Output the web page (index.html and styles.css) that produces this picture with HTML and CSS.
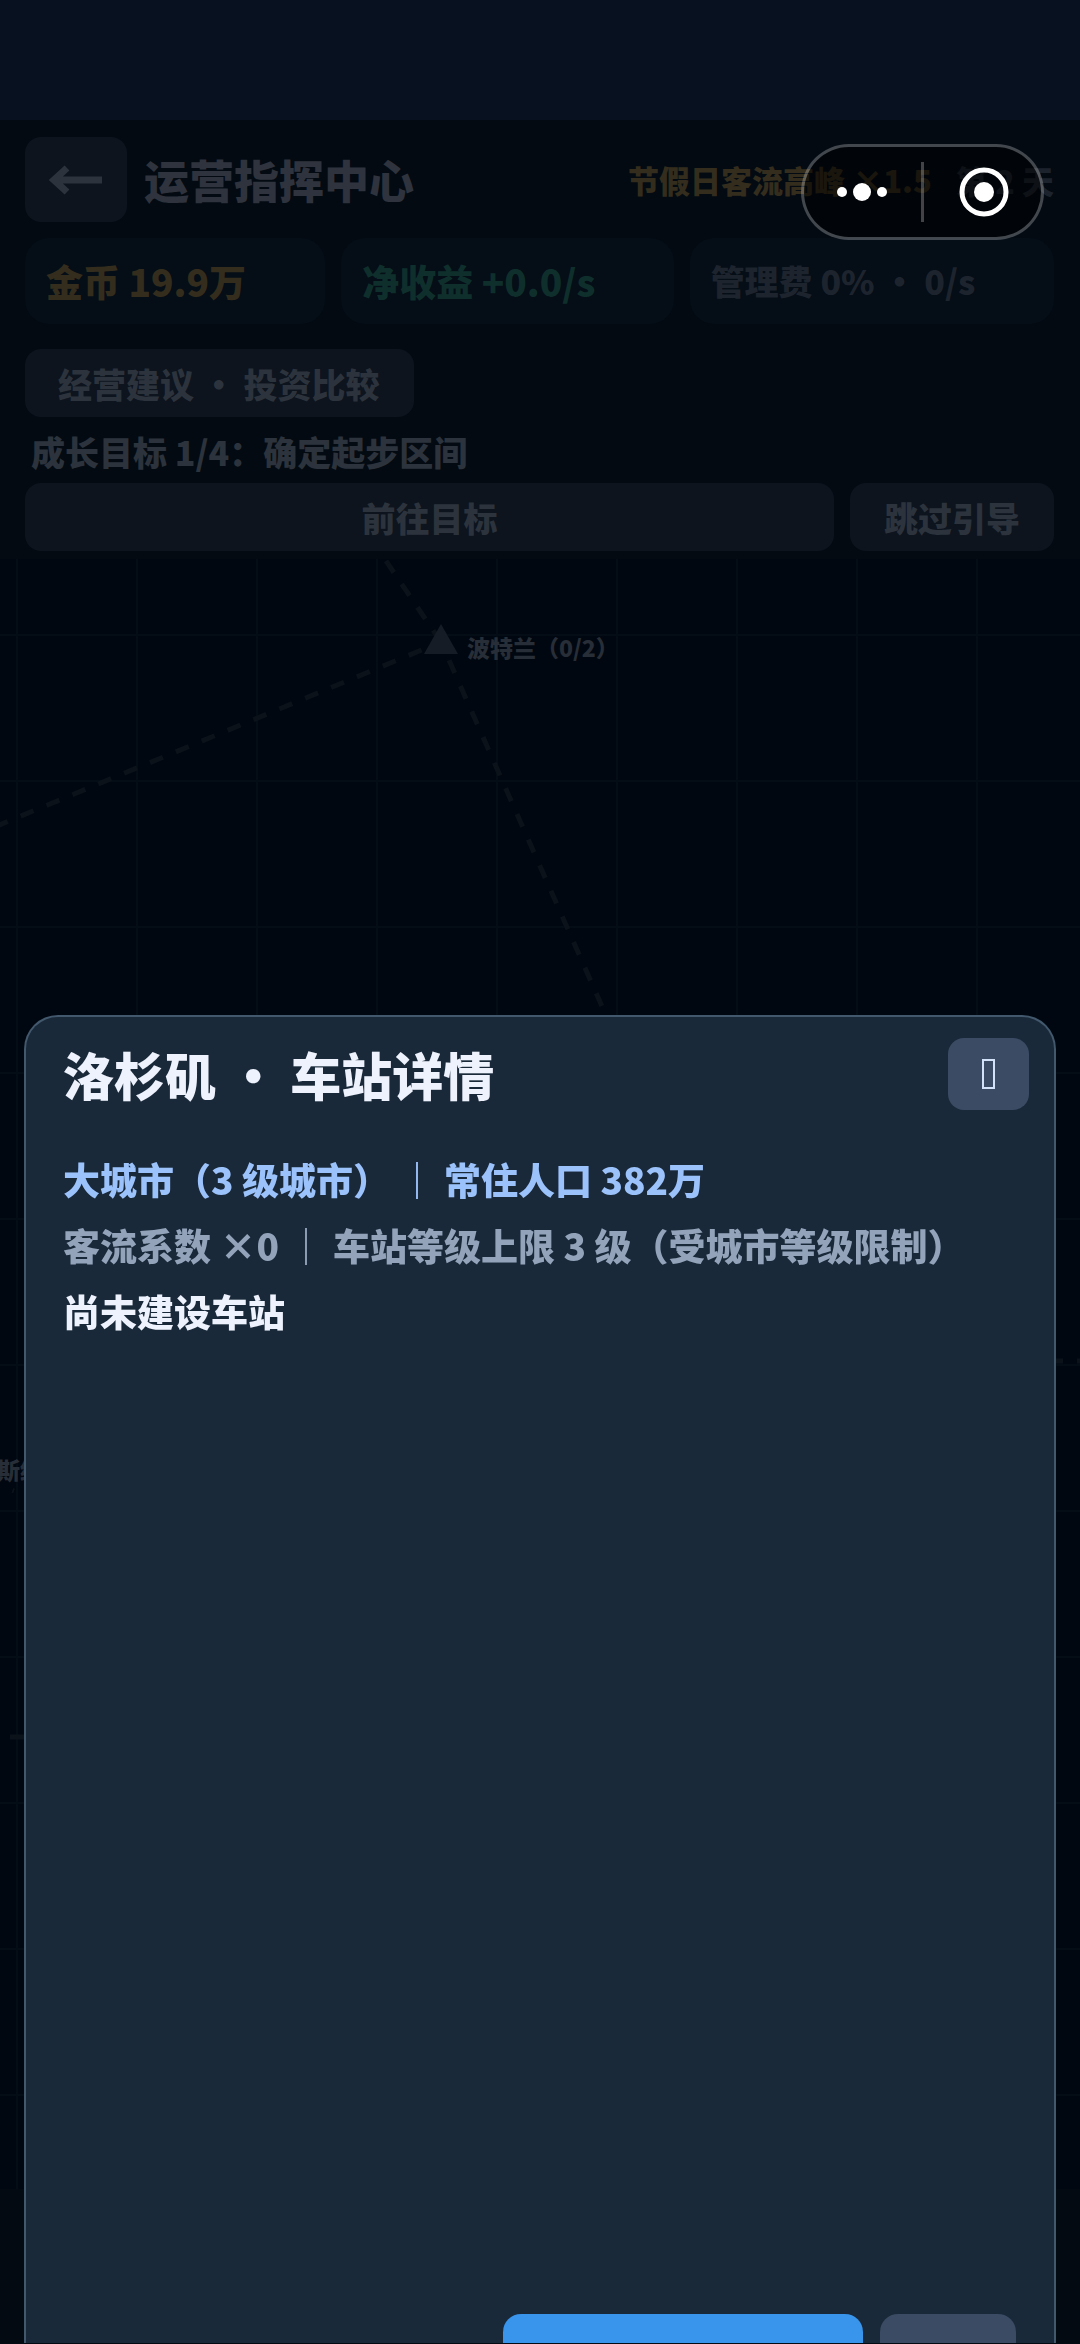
FILE: index.html
```html
<!DOCTYPE html>
<html lang="zh-CN">
<head>
<meta charset="utf-8">
<meta name="viewport" content="width=device-width, initial-scale=1">
<title>运营指挥中心</title>
<link rel="stylesheet" href="styles.css">
</head>
<body>
<div class="app">
  <div class="safe-area"></div>
  <header class="header">
    <div class="title-row">
      <button class="back" type="button" aria-label="返回">
        <svg width="54" height="30" viewBox="0 0 54 30" fill="none" stroke="currentColor" stroke-width="7"><path d="M53 15H5M18 3L5 15l13 12"/></svg>
      </button>
      <h1 class="title">运营指挥中心</h1>
      <span class="event">节假日客流高峰 ×1.5</span>
      <span class="day">第 2 天</span>
    </div>
    <div class="stats">
      <div class="stat gold">金币 19.9万</div>
      <div class="stat green">净收益 +0.0/s</div>
      <div class="stat fee">管理费 0% • 0/s</div>
    </div>
    <button class="btn advice" type="button">经营建议 • 投资比较</button>
    <p class="goal">成长目标 1/4：确定起步区间</p>
    <div class="guide">
      <button class="btn" type="button">前往目标</button>
      <button class="btn" type="button">跳过引导</button>
    </div>
  </header>
  <main class="map">
    <svg class="canvas" width="100%" height="100%">
      <defs>
        <pattern id="grid" x="16" y="75" width="120" height="146" patternUnits="userSpaceOnUse">
          <path d="M1 0V146M0 1H120" stroke="#040c15" stroke-width="2"/>
        </pattern>
      </defs>
      <rect width="100%" height="100%" fill="url(#grid)"/>
      <g class="routes">
        <path d="M441 83L384 -1"/>
        <path d="M441 83L-20 274" stroke-dashoffset="7"/>
        <path d="M441 83L650 556" stroke-dashoffset="8"/>
        <path d="M-14 922L14 932"/>
        <path d="M10 1178H60"/>
        <path d="M1049 802H1080"/>
      </g>
      <path class="station" d="M441 65l17 30h-34z"/>
      <text class="place" x="467" y="98">波特兰（0/2）</text>
      <text class="place" x="-26" y="920">拉斯维加斯</text>
    </svg>
  </main>
  <footer class="dock"></footer>
</div>

<div class="overlay">
  <section class="sheet" role="dialog" aria-labelledby="sheet-title">
    <div class="sheet-head">
      <h2 class="sheet-title" id="sheet-title">洛杉矶 • 车站详情</h2>
      <button class="close" type="button" aria-label="关闭">
        <svg width="13" height="30" viewBox="0 0 13 30" fill="none" stroke="currentColor" stroke-width="2"><path d="M1 1h11v28H1z"/></svg>
      </button>
    </div>
    <div class="sheet-body">
      <p class="city">大城市（3 级城市） ｜ 常住人口 382万</p>
      <p class="limit">客流系数 ×0 ｜ 车站等级上限 3 级（受城市等级限制）</p>
      <p>尚未建设车站</p>
    </div>
    <div class="actions">
      <button class="action primary" type="button" aria-label="建设车站"></button>
      <button class="action" type="button" aria-label="取消"></button>
    </div>
  </section>
</div>

<div class="capsule">
  <button class="capsule-btn" type="button" aria-label="更多">
    <svg width="50" height="20" viewBox="0 0 50 20" fill="currentColor"><circle cx="5" cy="10" r="5"/><circle cx="25" cy="10" r="9"/><circle cx="45" cy="10" r="5"/></svg>
  </button>
  <span class="divider"></span>
  <button class="capsule-btn" type="button" aria-label="关闭小程序">
    <svg width="50" height="50" viewBox="0 0 50 50"><circle cx="25" cy="25" r="22" fill="none" stroke="currentColor" stroke-width="5"/><circle cx="25" cy="25" r="10" fill="currentColor"/></svg>
  </button>
</div>
</body>
</html>
```
FILE: styles.css
```css
* {
  box-sizing: border-box;
}

body {
  margin: 0;
  background: #020810;
  color: #2c333c;
  font-family: "Noto Sans CJK SC", sans-serif;
  font-weight: 900;
}

h1, h2, p {
  margin: 0;
  font-weight: 900;
}

button {
  padding: 0;
  border: 0;
  color: inherit;
  font: inherit;
}

.app {
  display: flex;
  flex-direction: column;
  height: 100vh;
  overflow: hidden;
}

.safe-area {
  flex: none;
  height: 120px;
  background: #07111f;
}

.header {
  flex: none;
  padding: 17px 26px 8px 25px;
  background: #030a12;
}

.title-row {
  display: flex;
  align-items: center;
  height: 85px;
  margin-bottom: 16px;
  white-space: nowrap;
}

.back {
  display: grid;
  place-items: center;
  width: 102px;
  height: 85px;
  margin-right: 17px;
  border-radius: 16px;
  background: #0d141e;
}

.title {
  font-size: 45px;
  line-height: 60px;
  color: #2f333d;
}

.event {
  margin-left: auto;
  font-size: 31px;
  color: #342d1d;
}

.day {
  margin-left: 24px;
  font-size: 32px;
  color: #1d232c;
}

.stats {
  display: grid;
  grid-template-columns: 300fr 332fr 364fr;
  gap: 16px;
  margin-bottom: 25px;
}

.stat {
  padding: 0 21px;
  border-radius: 24px;
  background: #050d16;
  font-size: 37px;
  line-height: 86px;
  white-space: nowrap;
}

.gold {
  color: #342d1d;
}

.green {
  color: #0f2f2c;
}

.fee {
  color: #1d242e;
  font-size: 34px;
}

.btn {
  height: 68px;
  padding-top: 2px;
  border-radius: 16px;
  background: #0d141e;
  font-size: 34px;
  line-height: 66px;
}

.advice {
  display: block;
  padding: 2px 34px 0 33px;
}

.goal {
  padding: 4px 6px 0;
  font-size: 34px;
  line-height: 62px;
}

.guide {
  display: grid;
  grid-template-columns: 1fr 204px;
  gap: 16px;
}

.map {
  flex: 1;
  min-height: 0;
  background: #010710;
}

.canvas {
  display: block;
}

.routes {
  fill: none;
  stroke: #0b121a;
  stroke-width: 5;
  stroke-dasharray: 14 14;
}

.station {
  fill: #151c25;
}

.place {
  fill: #282e37;
  font-size: 23px;
}

.dock {
  flex: none;
  height: 155px;
  background: #030a12;
}

.overlay {
  position: fixed;
  inset: 0;
  display: flex;
  flex-direction: column;
  padding: 1015px 24px 1px;
}

.sheet {
  flex: 1;
  display: flex;
  flex-direction: column;
  border: 2px solid #42586d;
  border-bottom: 0;
  border-radius: 34px 34px 0 0;
  background: #1a293a;
  color: #edf2fc;
}

.sheet-head {
  display: flex;
  align-items: center;
  justify-content: space-between;
  padding: 17px 25px 0 37px;
}

.sheet-title {
  font-size: 51px;
  line-height: 80px;
}

.close {
  display: grid;
  place-items: center;
  width: 81px;
  height: 72px;
  border-radius: 16px;
  background: #3a4b63;
  color: #d3e2f8;
}

.sheet-body {
  flex: 1;
  padding: 32px 37px;
  font-size: 37px;
  line-height: 66px;
}

.city {
  color: #9bc2fb;
}

.limit {
  color: #93a4ba;
}

.actions {
  display: flex;
  justify-content: flex-end;
  gap: 17px;
  padding-right: 38px;
}

.action {
  width: 136px;
  height: 29px;
  border-radius: 18px 18px 0 0;
  background: #3a4b63;
}

.primary {
  width: 360px;
  background: #3994eb;
}

.capsule {
  position: absolute;
  top: 144px;
  right: 36px;
  display: grid;
  grid-template-columns: 114px 3px 120px;
  align-items: center;
  justify-content: end;
  width: 243px;
  height: 96px;
  padding-right: 0;
  border: 3px solid rgba(255, 255, 255, 0.25);
  border-radius: 48px;
  background: rgba(0, 0, 0, 0.5);
  background-clip: padding-box;
  color: #fff;
}

.capsule {
  grid-template-columns: 117px 3px 117px;
}

.capsule-btn {
  display: grid;
  place-items: center;
  height: 90px;
  background: none;
}

.capsule-btn:first-child {
  padding-right: 2px;
}

.capsule-btn:last-child {
  padding-left: 2px;
}

.divider {
  height: 60px;
  background: rgba(255, 255, 255, 0.25);
}
```
